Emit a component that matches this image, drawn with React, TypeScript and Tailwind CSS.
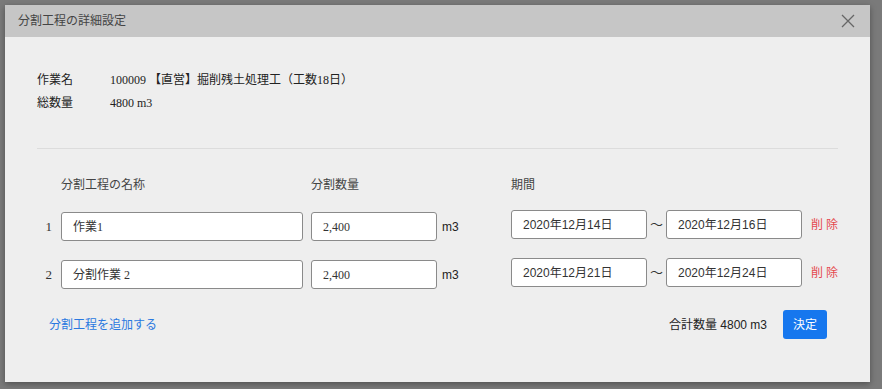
import React from "react";

const sans = "font-['Liberation_Sans','Noto_Sans_CJK_JP',sans-serif]";
const serifJa = "font-['Liberation_Serif','Noto_Sans_CJK_JP',serif]";

const rows = [
  { no: 1, name: "作業1", qty: "2,400", from: "2020年12月14日", to: "2020年12月16日" },
  { no: 2, name: "分割作業 2", qty: "2,400", from: "2020年12月21日", to: "2020年12月24日" },
];

function Field({ value, width, serif }: { value: string; width: string; serif?: boolean }) {
  return (
    <div
      className={`${width} h-[29px] shrink-0 flex items-center rounded-[3px] border border-[#8a8a8a] bg-white px-[11px] text-[12px] text-[#333] ${
        serif ? serifJa : sans
      }`}
    >
      {value}
    </div>
  );
}

export default function App() {
  return (
    <div className="h-[389px] w-full overflow-hidden bg-[#7a7a7a] pl-[5px] pt-[5px]">
      <div className="flex h-[377px] w-[865px] flex-col bg-[#eeeeee] shadow-[0_2px_6px_rgba(0,0,0,0.35)]">
        {/* header */}
        <div className="flex h-[32px] items-center justify-between bg-[#c6c6c6] pl-[13px] pr-[15px]">
          <span className={`text-[12px] text-[#444] ${sans}`}>分割工程の詳細設定</span>
          <svg width="14" height="14" viewBox="0 0 14 14" className="text-[#666]">
            <path d="M1 1L13 13M13 1L1 13" stroke="currentColor" strokeWidth="1.3" />
          </svg>
        </div>

        <div className="flex flex-1 flex-col px-[32px]">
          {/* info */}
          <div className="mt-[33px] flex flex-col gap-[3px] text-[12px] text-[#222]">
            <div className="flex h-[20px] items-center">
              <span className={`w-[73px] ${sans}`}>作業名</span>
              <span className={serifJa}>100009 【直営】掘削残土処理工（工数18日）</span>
            </div>
            <div className="flex h-[20px] items-center">
              <span className={`w-[73px] ${sans}`}>総数量</span>
              <span className={serifJa}>4800 m3</span>
            </div>
          </div>

          <div className="mt-[35px] h-px w-[801px] bg-[#dcdcdc]" />

          {/* column headings */}
          <div className={`mt-[28px] flex h-[16px] items-center text-[12px] text-[#444] ${sans}`}>
            <span className="w-[24px] shrink-0" />
            <span className="w-[250px] shrink-0">分割工程の名称</span>
            <span className="w-[200px] shrink-0">分割数量</span>
            <span>期間</span>
          </div>

          {/* rows */}
          <div className="mt-[19px] flex flex-col gap-[19px]">
            {rows.map((r) => (
              <div key={r.no} className="flex h-[29px] items-center">
                <span
                  className={`w-[24px] shrink-0 pr-[9px] text-right text-[13px] text-[#333] ${serifJa}`}
                >
                  {r.no}
                </span>
                <Field value={r.name} width="w-[242px]" serif />
                <div className="ml-[8px] flex w-[200px] shrink-0 items-center">
                  <Field value={r.qty} width="w-[126px]" serif />
                  <span className={`ml-[5px] text-[12px] text-[#222] ${sans}`}>m3</span>
                </div>
                <div className="mb-[4px] flex shrink-0 items-center">
                  <Field value={r.from} width="w-[136px]" />
                  <span className={`w-[19px] shrink-0 text-center text-[13px] text-[#333] ${sans}`}>
                    〜
                  </span>
                  <Field value={r.to} width="w-[136px]" />
                  <button
                    className={`ml-[9px] whitespace-nowrap text-[12px] tracking-[3px] text-[#e5484d] ${sans}`}
                  >
                    削除
                  </button>
                </div>
              </div>
            ))}
          </div>

          {/* footer */}
          <div className="mt-[21px] flex items-center justify-between pl-[12px] pr-[11px]">
            <button className={`text-[12px] text-[#2a78e0] ${sans}`}>分割工程を追加する</button>
            <div className="flex items-center">
              <span className={`text-[12px] text-[#222] ${sans}`}>合計数量 4800 m3</span>
              <button
                className={`ml-[16px] h-[29px] w-[44px] rounded-[3px] bg-[#1677ee] text-[12px] text-white ${sans}`}
              >
                決定
              </button>
            </div>
          </div>
        </div>
      </div>
    </div>
  );
}
